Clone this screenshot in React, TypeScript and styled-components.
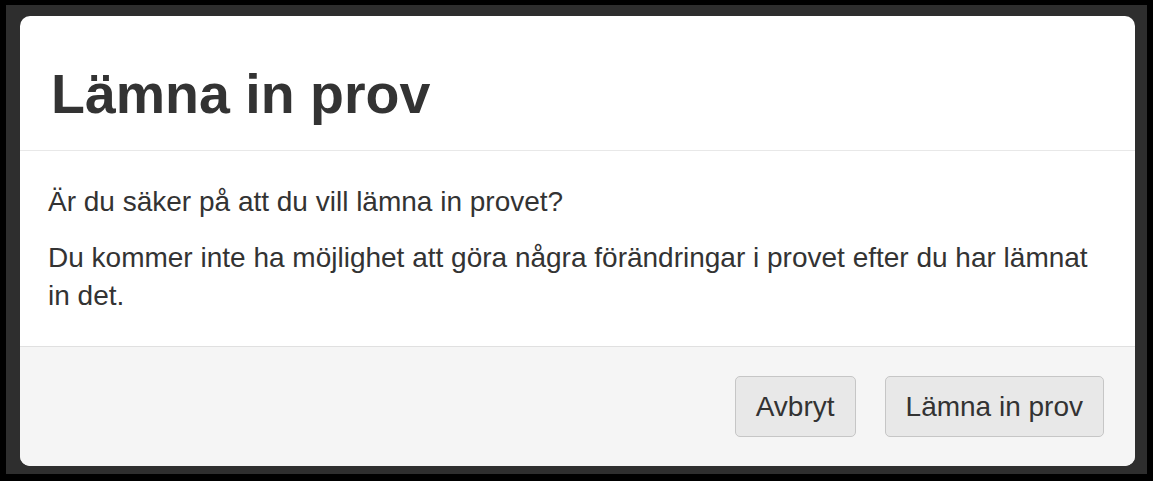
import React from "react";
import styled, { createGlobalStyle } from "styled-components";

const GlobalStyle = createGlobalStyle`
  html, body {
    margin: 0;
    padding: 0;
    background: #000;
  }
  body {
    font-family: "Liberation Sans", Arial, Helvetica, sans-serif;
    color: #333;
  }
  * {
    box-sizing: border-box;
  }
`;

const App: React.FC = () => {
  return (
    <>
      <GlobalStyle />
      <STDScreen>
        <STDBackdrop>
          <STDDialog role="dialog" aria-modal="true">
            <STDHeader>
              <STDTitle>Lämna in prov</STDTitle>
            </STDHeader>
            <STDBody>
              <STDText>Är du säker på att du vill lämna in provet?</STDText>
              <STDText>
                Du kommer inte ha möjlighet att göra några förändringar i provet
                efter du har lämnat in det.
              </STDText>
            </STDBody>
            <STDFooter>
              <STDButton type="button">Avbryt</STDButton>
              <STDButton type="button">Lämna in prov</STDButton>
            </STDFooter>
          </STDDialog>
        </STDBackdrop>
      </STDScreen>
    </>
  );
};

export default App;

const STDScreen = styled.div`
  width: 1153px;
  height: 481px;
  padding: 5px 6px 7px 6px;
  background: #000;
`;

const STDBackdrop = styled.div`
  display: flex;
  height: 100%;
  padding: 11px 12px 8px 14px;
  background: #2e2e2e;
`;

const STDDialog = styled.div`
  flex: 1;
  display: flex;
  flex-direction: column;
  background: #fff;
  border-radius: 10px;
  overflow: hidden;
`;

const STDHeader = styled.div`
  padding: 48px 28px 25px 31px;
  border-bottom: 1px solid #e8e8e8;
`;

const STDTitle = styled.h2`
  margin: 0;
  font-size: 55.5px;
  line-height: 61px;
  font-weight: 700;
  color: #333;
`;

const STDBody = styled.div`
  padding: 32px 28px 31px;
`;

const STDText = styled.p`
  margin: 0 0 18px;
  font-size: 28px;
  line-height: 38px;
  color: #333;

  &:last-child {
    margin-bottom: 0;
  }
`;

const STDFooter = styled.div`
  flex: 1;
  display: flex;
  justify-content: flex-end;
  align-items: flex-start;
  gap: 29px;
  padding: 29px 31px 29px;
  border-top: 1px solid #e0e0e0;
  background: #f5f5f5;
`;

const STDButton = styled.button`
  height: 61px;
  padding: 0 20px;
  font-family: "Liberation Sans", Arial, Helvetica, sans-serif;
  font-size: 28px;
  color: #333;
  background: #e8e8e8;
  border: 1px solid #c6c6c6;
  border-radius: 5px;
  cursor: pointer;
`;
